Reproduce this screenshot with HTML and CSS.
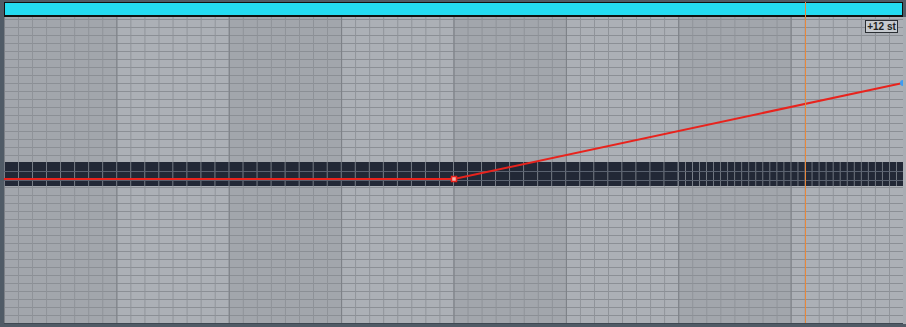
FILE: index.html
```html
<!DOCTYPE html>
<html lang="en">
<head>
  <meta charset="UTF-8" />
  <meta name="viewport" content="width=device-width, initial-scale=1.0" />
  <title>Clip Envelope</title>
  <link rel="stylesheet" href="styles.css">
</head>
<body>
  <div class="editor">
    <div class="clip-bar"></div>

    <div class="lanes">
      <div class="grid">
        <div class="grid-part grid-top"></div>
        <div class="band">
          <div class="band-left"></div>
          <div class="band-right"></div>
        </div>
        <div class="grid-part grid-bottom"></div>
      </div>

      <svg class="envelope" width="899" height="306" viewBox="0 0 899 306">
        <polyline points="0,162 450,162 899,66" fill="none" stroke="#e8231d" stroke-width="2" />
        <rect x="447.5" y="159.5" width="5" height="5" fill="#f0b3ae" stroke="#e8231d" stroke-width="1.5" />
        <circle cx="899" cy="66" r="3" fill="#3d9cf2" />
      </svg>

      <div class="range-label">+12 st</div>
    </div>

    <div class="playhead"></div>
  </div>
</body>
</html>
```

FILE: styles.css
```css
body {
  margin: 0;
  background-color: #505b66;
  font-family: "Liberation Sans", Arial, sans-serif;
  height: 327px;
  overflow: hidden;
}

.editor {
  position: relative;
  margin-left: 4px;
}

.clip-bar {
  margin: 2px 3px 0 0;
  height: 12px;
  background-color: #24dcf2;
  border: 1px solid #111;
  border-bottom-width: 2px;
}

.lanes {
  position: relative;
  background-color: #a9adb3;
  padding-right: 3px;
}

.grid {
  width: 899px;
  display: flex;
  flex-direction: column;
}

.grid-part {
  background:
    linear-gradient(to right, #7c8086 1px, transparent 1px) 0 0 / calc(100% / 8) 100%,
    linear-gradient(to right, #8e9298 1px, transparent 1px) 0 0 / calc(100% / 64) 100%,
    linear-gradient(to bottom, #8b8f95 1px, transparent 1px) 0 2px / 100% 8px,
    linear-gradient(to right, #a2a6ac 50%, #acb0b6 50%) 0 0 / 25% 100%;
}

.grid-top {
  height: 145px;
}

.grid-bottom {
  height: 137px;
  background-position: 0 0, 0 0, 0 1px, 0 0;
  border-bottom: 1px solid #3f4852;
}

.band {
  height: 24px;
  display: flex;
  background-color: #222836;
}

.band-left,
.band-right {
  background:
    linear-gradient(to bottom, transparent 9px, #5a6270 9px, #5a6270 10px, transparent 10px, transparent 18px, #5a6270 18px, #5a6270 19px, transparent 19px),
    linear-gradient(to right, #7a8089 1px, transparent 1px) 0 0 / calc(100% / 48) 100%;
}

.band-left {
  flex: 6;
}

.band-right {
  flex: 2;
  background-size: auto, calc(100% / 32) 100%;
}

.envelope {
  position: absolute;
  top: 0;
  left: 0;
}

.range-label {
  position: absolute;
  top: 3px;
  left: 861px;
  width: 31px;
  height: 11px;
  border: 1px solid #2a2e33;
  background-color: #c6cacf;
  color: #1c1f22;
  font-size: 10px;
  font-weight: bold;
  line-height: 11px;
  text-align: center;
  white-space: nowrap;
}

.playhead {
  position: absolute;
  top: 0;
  left: 801px;
  width: 1px;
  height: 321px;
  background-color: #e8873a;
}
```
